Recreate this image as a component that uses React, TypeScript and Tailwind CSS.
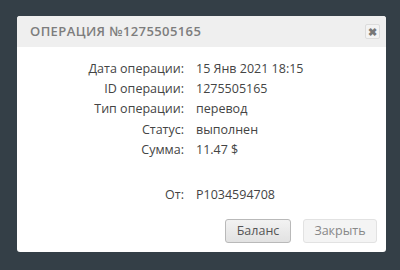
export default function App() {
  const rows = [
    ["Дата операции:", "15 Янв 2021 18:15"],
    ["ID операции:", "1275505165"],
    ["Тип операции:", "перевод"],
    ["Статус:", "выполнен"],
    ["Сумма:", "11.47 $"],
  ];

  return (
    <div className="w-[400px] h-[270px] bg-[#343f47] pt-4 pl-[17px] font-['Open_Sans',sans-serif]">
      <div className="w-[369px] h-[236px] bg-white rounded-[3px] overflow-hidden flex flex-col">
        {/* header */}
        <div className="h-[31px] bg-[#efefef] flex items-center justify-between pl-[13px] pr-[6px]">
          <span className="text-[13px] font-semibold tracking-[0.4px] text-[#7d7d7d]">
            ОПЕРАЦИЯ №1275505165
          </span>
          <button className="w-[15px] h-[15px] border border-[#dcdcdc] rounded-[2px] bg-[#f3f3f3] flex items-center justify-center text-[#777] text-[11px] font-bold leading-none">
            ✖
          </button>
        </div>

        {/* details */}
        <div className="flex flex-col text-[12.5px] text-[#444] pt-[12px]">
          {rows.map(([label, value]) => (
            <div key={label} className="flex h-[20.3px] items-center">
              <span className="w-[167px] text-right">{label}</span>
              <span className="ml-[12px]">{value}</span>
            </div>
          ))}
          <div className="flex h-[20px] items-center mt-[25px]">
            <span className="w-[167px] text-right">От:</span>
            <span className="ml-[12px]">P1034594708</span>
          </div>
        </div>

        {/* buttons */}
        <div className="flex justify-end gap-3 pr-[9px] mt-[14px]">
          <button className="w-[66px] h-[24px] rounded-[3px] border border-[#b9b9b9] bg-gradient-to-b from-[#f2f2f2] to-[#e2e2e2] text-[12.5px] text-[#555]">
            Баланс
          </button>
          <button className="w-[74px] h-[24px] rounded-[3px] border border-[#e2e2e2] bg-[#f4f4f4] text-[12.5px] text-[#888]">
            Закрыть
          </button>
        </div>
      </div>
    </div>
  );
}
